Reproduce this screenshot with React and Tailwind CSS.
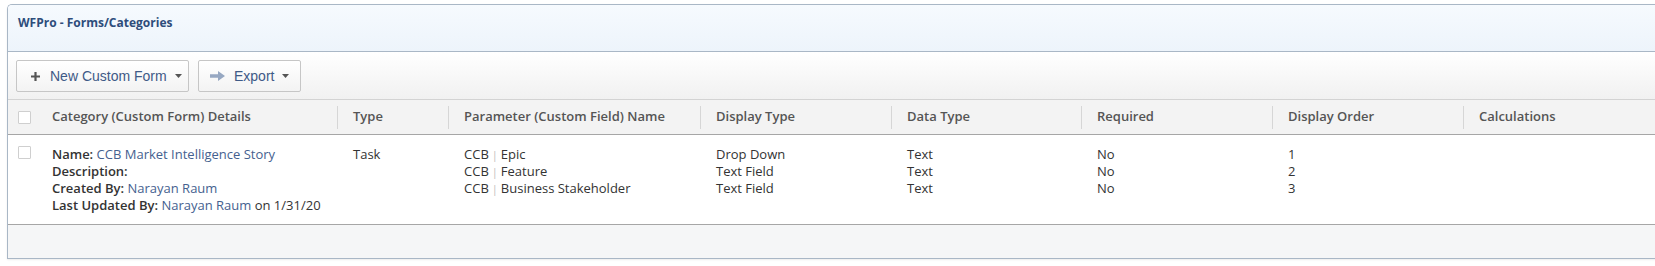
import React from "react";

const font = { fontFamily: '"Open Sans", "Liberation Sans", sans-serif' };

function Caret() {
  return (
    <svg width="7" height="4" viewBox="0 0 7 4" className="ml-[8px]">
      <path d="M0 0 L7 0 L3.5 4 Z" fill="#555" />
    </svg>
  );
}

function Checkbox() {
  return <div className="w-[13px] h-[13px] border border-[#cfcfcf] bg-white rounded-[1px]" />;
}

const cols = [
  { label: "Type", w: "w-[111px]" },
  { label: "Parameter (Custom Field) Name", w: "w-[252px]" },
  { label: "Display Type", w: "w-[191px]" },
  { label: "Data Type", w: "w-[190px]" },
  { label: "Required", w: "w-[191px]" },
  { label: "Display Order", w: "w-[191px]" },
  { label: "Calculations", w: "w-[190px]" },
];

function Pipe() {
  return <span className="text-[#bdbdbd] mx-[3px] text-[11px]">|</span>;
}

export default function App() {
  return (
    <div className="w-[1655px] h-[266px] overflow-hidden bg-white pl-[7px] pt-[4px]" style={font}>
      <div className="w-[1700px] border-t border-l border-b border-[#a9b7c6] rounded-tl-[5px] overflow-hidden shadow-[0_1px_2px_rgba(0,0,0,0.08)]">
        {/* Header */}
        <div className="h-[47px] border-b border-[#a9b7c6] bg-gradient-to-b from-[#f6fafe] to-[#edf4fb] pl-[10px] pt-[10px]">
          <div className="text-[12px] leading-[16px] font-bold text-[#2e4d7b]">WFPro - Forms/Categories</div>
        </div>
        {/* Toolbar */}
        <div className="h-[48px] border-b border-[#d3d3d3] bg-gradient-to-b from-[#ffffff] to-[#f1f1f1] pl-[8px] pt-[8px] flex gap-[9px]" style={{ fontFamily: '"Liberation Sans", Arial, sans-serif' }}>
          <div className="h-[32px] w-[173px] border border-[#c6c6c6] rounded-[2px] bg-gradient-to-b from-[#ffffff] to-[#f3f3f3] flex items-center pl-[14px]">
            <svg width="9" height="9" viewBox="0 0 9 9" className="mr-[10px]">
              <path d="M3.4 0 H5.6 V3.4 H9 V5.6 H5.6 V9 H3.4 V5.6 H0 V3.4 H3.4 Z" fill="#555" />
            </svg>
            <span className="text-[14px] text-[#3f5a87]">New Custom Form</span>
            <Caret />
          </div>
          <div className="h-[32px] w-[103px] border border-[#c6c6c6] rounded-[2px] bg-gradient-to-b from-[#ffffff] to-[#f3f3f3] flex items-center pl-[11px]">
            <svg width="15" height="10" viewBox="0 0 15 10" className="mr-[9px]">
              <path d="M0 3.2 H8 V0 L15 5 L8 10 V6.8 H0 Z" fill="#97a8c2" />
            </svg>
            <span className="text-[14px] text-[#3f5a87]">Export</span>
            <Caret />
          </div>
        </div>
        {/* Table header */}
        <div className="h-[35px] border-b border-[#a6a6a6] bg-[#f3f3f3] flex items-center">
          <div className="w-[329px] flex items-center pl-[10px]">
            <Checkbox />
            <span className="ml-[21px] text-[13px] font-semibold text-[#555]">Category (Custom Form) Details</span>
          </div>
          {cols.map((c) => (
            <div key={c.label} className={`${c.w} flex items-center`}>
              <div className="h-[23px] border-l border-[#d6d6d6]" />
              <span className="ml-[15px] text-[13px] font-semibold text-[#555]">{c.label}</span>
            </div>
          ))}
        </div>
        {/* Body row */}
        <div className="h-[90px] border-b border-[#a6a6a6] bg-white flex pt-[11px] text-[13px] leading-[17px] text-[#333]">
          <div className="w-[329px] flex pl-[10px]">
            <div>
              <Checkbox />
            </div>
            <div className="ml-[21px]">
              <div><span className="font-semibold">Name:</span> <span className="text-[#45618f]">CCB Market Intelligence Story</span></div>
              <div><span className="font-semibold">Description:</span></div>
              <div><span className="font-semibold">Created By:</span> <span className="text-[#45618f]">Narayan Raum</span></div>
              <div><span className="font-semibold">Last Updated By:</span> <span className="text-[#45618f]">Narayan Raum</span> on 1/31/20</div>
            </div>
          </div>
          <div className="w-[111px] pl-[16px]">Task</div>
          <div className="w-[252px] pl-[16px]">
            <div>CCB<Pipe />Epic</div>
            <div>CCB<Pipe />Feature</div>
            <div>CCB<Pipe />Business Stakeholder</div>
          </div>
          <div className="w-[191px] pl-[16px]">
            <div>Drop Down</div>
            <div>Text Field</div>
            <div>Text Field</div>
          </div>
          <div className="w-[190px] pl-[16px]">
            <div>Text</div>
            <div>Text</div>
            <div>Text</div>
          </div>
          <div className="w-[191px] pl-[16px]">
            <div>No</div>
            <div>No</div>
            <div>No</div>
          </div>
          <div className="w-[191px] pl-[16px]">
            <div>1</div>
            <div>2</div>
            <div>3</div>
          </div>
          <div className="w-[190px]" />
        </div>
        {/* Footer */}
        <div className="h-[33px] bg-[#f5f6f7]" />
      </div>
    </div>
  );
}
